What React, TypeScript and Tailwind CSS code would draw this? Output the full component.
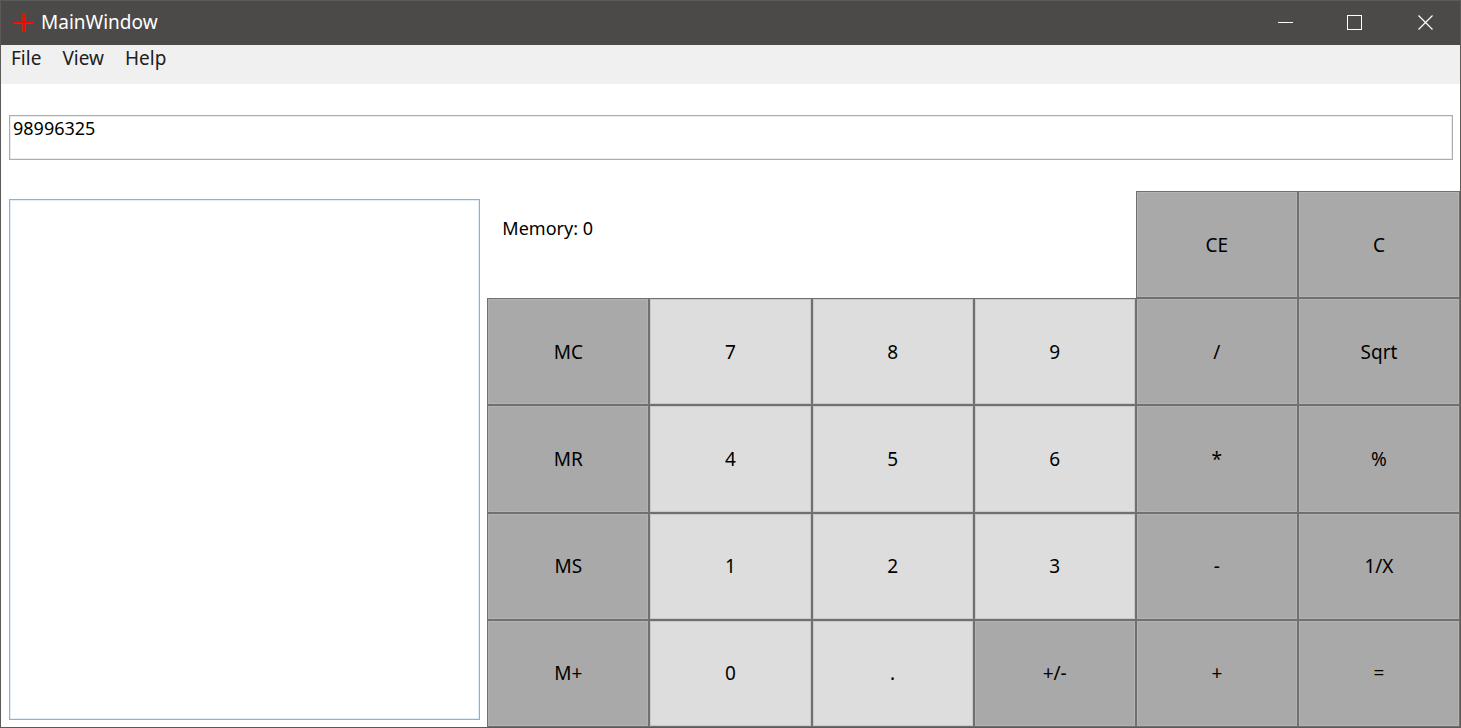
import React, { useState } from "react";

const menus = ["File", "View", "Help"];

type Key = { label: string; light?: boolean };

const topKeys: Key[] = [{ label: "CE" }, { label: "C" }];

const keys: Key[] = [
  { label: "MC" },
  { label: "7", light: true },
  { label: "8", light: true },
  { label: "9", light: true },
  { label: "/" },
  { label: "Sqrt" },
  { label: "MR" },
  { label: "4", light: true },
  { label: "5", light: true },
  { label: "6", light: true },
  { label: "*" },
  { label: "%" },
  { label: "MS" },
  { label: "1", light: true },
  { label: "2", light: true },
  { label: "3", light: true },
  { label: "-" },
  { label: "1/X" },
  { label: "M+" },
  { label: "0", light: true },
  { label: ".", light: true },
  { label: "+/-" },
  { label: "+" },
  { label: "=" },
];

function KeyButton({ label, light }: Key) {
  const tone = light
    ? "bg-[#dddddd] inset-shadow-[0_0_0_1px_#c9c9c9]"
    : "bg-[#a9a9a9] inset-shadow-[0_0_0_1px_#b2b2b2]";
  return (
    <button type="button" className={`min-w-0 border border-[#707070] text-[19px] text-black ${tone}`}>
      {label}
    </button>
  );
}

function TitleBar() {
  return (
    <header className="flex h-11 items-center bg-[#4c4a48] pl-3 text-white">
      <svg className="mr-2 size-5" viewBox="0 0 20 20" shapeRendering="crispEdges" aria-hidden="true">
        <path d="M9 0h4v19H9z" fill="#a53a10" />
        <path d="M1 8h19v3H1z" fill="#d42a08" />
        <path d="M10 0h2v19h-2zM1 8h19v2H1z" fill="#ff0000" />
      </svg>
      <h1 className="pb-[2px] text-[19px]">MainWindow</h1>
      <div className="ml-auto flex h-full">
        <button type="button" aria-label="Minimize" className="grid w-[70px] place-items-center">
          <svg className="size-4" viewBox="0 0 16 16" shapeRendering="crispEdges">
            <path d="M1 7.5h15" stroke="white" />
          </svg>
        </button>
        <button type="button" aria-label="Maximize" className="grid w-[70px] place-items-center">
          <svg className="size-4" viewBox="0 0 16 16" fill="none" shapeRendering="crispEdges">
            <path d="M.5 .5h14v14H.5z" stroke="white" />
          </svg>
        </button>
        <button type="button" aria-label="Close" className="grid w-[70px] place-items-center">
          <svg className="size-4" viewBox="0 0 16 16" fill="none">
            <path d="M1.5 .5l14 14M15.5 .5l-14 14" stroke="white" strokeWidth="1.2" />
          </svg>
        </button>
      </div>
    </header>
  );
}

export default function App() {
  const [value, setValue] = useState("98996325");

  return (
    <div className="flex min-h-screen flex-col border border-[#5b5a58] bg-white font-['Noto_Sans','Open_Sans',sans-serif] text-[18px] leading-6 text-black">
      <TitleBar />
      <nav className="flex h-[39px] items-start gap-[21px] bg-[#f0f0f0] px-[10px] pt-px text-[19px] text-[#212121]">
        {menus.map((menu) => (
          <button key={menu} type="button">
            {menu}
          </button>
        ))}
      </nav>
      <main className="grid flex-1 grid-cols-9 grid-rows-6">
        <div className="col-span-9 flex items-center pr-[7px] pl-2">
          <textarea
            aria-label="Display"
            rows={1}
            value={value}
            onChange={(event) => setValue(event.target.value)}
            className="h-[45px] w-full resize-none border border-[#abadb3] px-[3px] inset-shadow-[0_0_0_1px_#eaebec] outline-none"
          />
        </div>
        <section
          aria-label="History"
          className="col-span-3 row-span-5 m-2 mr-[7px] mb-[7px] border border-[#7eb4ea] inset-shadow-[0_0_0_1px_#e0edfa]"
        />
        <p className="col-span-4 pt-[25px] pl-[15px]">Memory: 0</p>
        {topKeys.map((key) => (
          <KeyButton key={key.label} {...key} />
        ))}
        {keys.map((key) => (
          <KeyButton key={key.label} {...key} />
        ))}
      </main>
    </div>
  );
}
